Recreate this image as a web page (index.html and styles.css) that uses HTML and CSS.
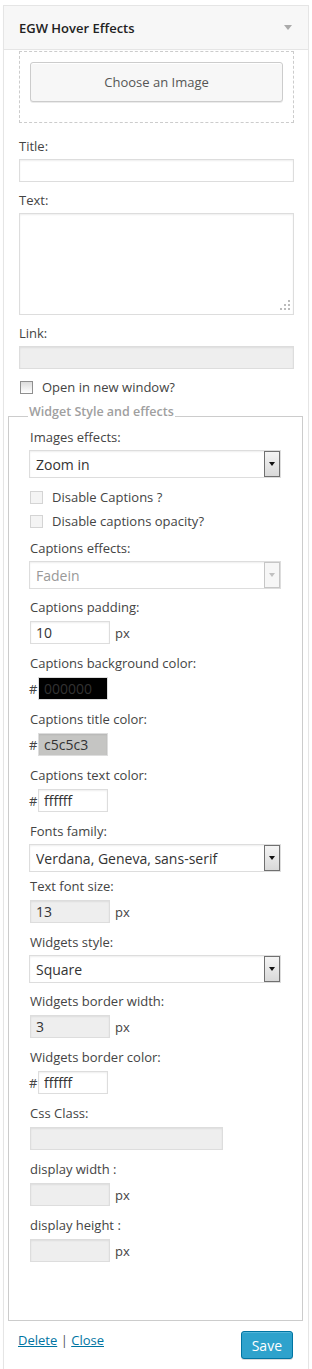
FILE: index.html
```html
<!DOCTYPE html>
<html lang="en">
<head>
  <meta charset="UTF-8" />
  <meta name="viewport" content="width=device-width, initial-scale=1.0"/>
  <title>EGW Hover Effects</title>
  <link rel="stylesheet" href="styles.css">
</head>
<body>

  <div class="widget">
    <div class="widget-top">
      <h3 class="widget-title">EGW Hover Effects</h3>
      <span class="widget-arrow"></span>
    </div>

    <div class="widget-inside">
      <div class="upload-box">
        <button type="button" class="choose-btn">Choose an Image</button>
      </div>

      <div class="field">
        <label for="egwTitle">Title:</label>
        <input type="text" id="egwTitle" class="text-input wide">
      </div>

      <div class="field">
        <label for="egwText">Text:</label>
        <div class="textarea-wrap">
          <textarea id="egwText" class="text-input wide area"></textarea>
          <svg class="grip" width="12" height="12" viewBox="0 0 12 12">
            <rect x="9" y="0" width="2" height="2" fill="#bbb"/>
            <rect x="5" y="4" width="2" height="2" fill="#bbb"/>
            <rect x="9" y="4" width="2" height="2" fill="#bbb"/>
            <rect x="1" y="8" width="2" height="2" fill="#bbb"/>
            <rect x="5" y="8" width="2" height="2" fill="#bbb"/>
            <rect x="9" y="8" width="2" height="2" fill="#bbb"/>
          </svg>
        </div>
      </div>

      <div class="field">
        <label for="egwLink">Link:</label>
        <input type="text" id="egwLink" class="text-input wide off" disabled>
      </div>

      <div class="check-row first-check">
        <input type="checkbox" id="egwNew" class="check">
        <label for="egwNew">Open in new window?</label>
      </div>
    </div>

    <fieldset class="style-box">
      <legend>Widget Style and effects</legend>

      <div class="field sel-field gap-10">
        <label>Images effects:</label>
        <div class="select-wrap">
          <select class="select">
            <option>Zoom in</option>
          </select>
          <span class="select-arrow"></span>
        </div>
      </div>

      <div class="check-row">
        <input type="checkbox" class="check" disabled>
        <label>Disable Captions ?</label>
      </div>
      <div class="check-row last">
        <input type="checkbox" class="check" disabled>
        <label>Disable captions opacity?</label>
      </div>

      <div class="field sel-field gap-9">
        <label>Captions effects:</label>
        <div class="select-wrap">
          <select class="select" disabled>
            <option>Fadein</option>
          </select>
          <span class="select-arrow dim"></span>
        </div>
      </div>

      <div class="field">
        <label>Captions padding:</label>
        <div class="inline">
          <input type="text" class="text-input short" value="10">
          <span class="unit">px</span>
        </div>
      </div>

      <div class="field">
        <label>Captions background color:</label>
        <div class="inline hash-row">
          <span class="hash">#</span>
          <input type="text" class="text-input color" value="000000" style="background-color:#000000">
        </div>
      </div>

      <div class="field">
        <label>Captions title color:</label>
        <div class="inline hash-row">
          <span class="hash">#</span>
          <input type="text" class="text-input color" value="c5c5c3" style="background-color:#c5c5c3">
        </div>
      </div>

      <div class="field">
        <label>Captions text color:</label>
        <div class="inline hash-row">
          <span class="hash">#</span>
          <input type="text" class="text-input color" value="ffffff" style="background-color:#ffffff">
        </div>
      </div>

      <div class="field sel-field gap-5">
        <label>Fonts family:</label>
        <div class="select-wrap">
          <select class="select">
            <option>Verdana, Geneva, sans-serif</option>
          </select>
          <span class="select-arrow"></span>
        </div>
      </div>

      <div class="field">
        <label>Text font size:</label>
        <div class="inline">
          <input type="text" class="text-input short off" value="13" disabled>
          <span class="unit">px</span>
        </div>
      </div>

      <div class="field sel-field gap-9">
        <label>Widgets style:</label>
        <div class="select-wrap">
          <select class="select">
            <option>Square</option>
          </select>
          <span class="select-arrow"></span>
        </div>
      </div>

      <div class="field">
        <label>Widgets border width:</label>
        <div class="inline">
          <input type="text" class="text-input short off" value="3" disabled>
          <span class="unit">px</span>
        </div>
      </div>

      <div class="field">
        <label>Widgets border color:</label>
        <div class="inline hash-row">
          <span class="hash">#</span>
          <input type="text" class="text-input color" value="ffffff" style="background-color:#ffffff">
        </div>
      </div>

      <div class="field">
        <label>Css Class:</label>
        <input type="text" class="text-input css-class off" disabled>
      </div>

      <div class="field">
        <label>display width :</label>
        <div class="inline">
          <input type="text" class="text-input short off" disabled>
          <span class="unit">px</span>
        </div>
      </div>

      <div class="field last">
        <label>display height :</label>
        <div class="inline">
          <input type="text" class="text-input short off" disabled>
          <span class="unit">px</span>
        </div>
      </div>
    </fieldset>

    <div class="widget-actions">
      <div class="links">
        <a href="#">Delete</a> <span class="sep">|</span> <a href="#">Close</a>
      </div>
      <button type="button" class="button-primary">Save</button>
    </div>
  </div>

</body>
</html>
```

FILE: styles.css
```css
body {
  margin: 0;
  font-family: "Open Sans", "Liberation Sans", sans-serif;
  font-size: 13px;
  color: #444;
  background: #fff;
}
.widget {
  width: 306px;
  margin: 5px 0 0 3px;
  box-sizing: border-box;
  border: 1px solid #e5e5e5;
  background: #fff;
  box-shadow: 0 1px 1px rgba(0,0,0,0.04);
}
.widget-top {
  height: 43px;
  display: flex;
  align-items: center;
  justify-content: space-between;
  padding: 0 16px 0 15px;
  background: #f7f7f7;
  border-bottom: 1px solid #e5e5e5;
}
.widget-title {
  margin: 0;
  font-size: 13px;
  font-weight: 600;
  color: #222;
}
.widget-arrow {
  width: 0;
  height: 0;
  border-left: 4px solid transparent;
  border-right: 4px solid transparent;
  border-top: 5px solid #aaa;
}
.widget-inside {
  padding: 1px 14px 8px 15px;
}
.upload-box {
  border: 1px dashed #ccc;
  padding: 10px 10px 20px;
  margin-bottom: 14px;
}
.choose-btn {
  display: block;
  width: 100%;
  height: 40px;
  border: 1px solid #ccc;
  border-radius: 3px;
  background: #f7f7f7;
  color: #555;
  font-family: "Open Sans", sans-serif;
  font-size: 13px;
  box-shadow: inset 0 1px 0 #fff, 0 1px 0 rgba(0,0,0,0.08);
}
.field {
  margin: 0 0 9px;
}
.field label {
  display: block;
  line-height: 18px;
  margin-bottom: 4px;
}
.text-input {
  display: block;
  box-sizing: border-box;
  height: 23px;
  margin: 0;
  padding: 0 5px;
  border: 1px solid #ddd;
  box-shadow: inset 0 1px 2px rgba(0,0,0,0.07);
  background: #fff;
  color: #333;
  font-family: "Open Sans", sans-serif;
  font-size: 14px;
}
.text-input.off {
  background: #eee;
}
.wide {
  width: 100%;
}
.textarea-wrap {
  position: relative;
}
.area {
  height: 102px;
  resize: none;
}
.grip {
  position: absolute;
  right: 3px;
  bottom: 3px;
}
.check-row {
  display: flex;
  align-items: center;
  line-height: 18px;
  margin-bottom: 6px;
}
.check-row.first-check {
  margin: 0 0 0 1px;
}
.check-row.last {
  margin-bottom: 9px;
}
.check {
  appearance: none;
  width: 13px;
  height: 13px;
  margin: 0 9px 0 0;
  border: 1px solid #8f8f8f;
  background: linear-gradient(#dcdcdc, #fff);
}
.check:disabled {
  border-color: #d4d4d4;
  background: #f4f4f4;
}
.style-box {
  margin: 0 5px 0 4px;
  padding: 0 21px 58px;
  border: 1px solid #ccc;
  min-width: 0;
}
.style-box legend {
  margin-left: -2px;
  padding: 0 1px 8px;
  line-height: 16px;
  font-size: 12.5px;
  font-weight: 600;
  color: #a0a0a0;
}
.style-box .field {
  margin-bottom: 10px;
}
.style-box .field label {
  margin-bottom: 5px;
}
.style-box .sel-field label {
  margin-bottom: 4px;
}
.style-box .gap-10 { margin-bottom: 10px; }
.style-box .gap-9 { margin-bottom: 9px; }
.style-box .gap-5 { margin-bottom: 5px; }
.style-box .field.last {
  margin-bottom: 0;
}
.select-wrap {
  position: relative;
  width: 252px;
  margin-left: -1px;
}
.select {
  appearance: none;
  display: block;
  width: 100%;
  height: 28px;
  margin: 0;
  padding: 0 6px;
  border: 1px solid #ddd;
  border-radius: 0;
  box-shadow: inset 0 1px 2px rgba(0,0,0,0.07);
  background: #fff;
  color: #333;
  font-family: "Open Sans", sans-serif;
  font-size: 14px;
}
.select:disabled {
  color: #999;
  opacity: 1;
}
.select-arrow {
  position: absolute;
  top: 1px;
  right: 1px;
  width: 16px;
  height: 26px;
  box-sizing: border-box;
  border: 1px solid #707070;
  background: linear-gradient(#f4f4f4, #d9d9d9);
  display: flex;
  align-items: center;
  justify-content: center;
  pointer-events: none;
}
.select-arrow::after {
  content: "";
  border-left: 3px solid transparent;
  border-right: 3px solid transparent;
  border-top: 4px solid #111;
}
.select-arrow.dim {
  border-color: #c6c6c6;
  background: #f6f6f6;
}
.select-arrow.dim::after {
  border-top-color: #c0c0c0;
}
.inline {
  display: flex;
  align-items: center;
}
.short {
  width: 80px;
}
.unit {
  margin-left: 5px;
}
.hash-row {
  margin-left: -1px;
}
.hash {
  width: 9px;
}
.color {
  width: 70px;
}
.css-class {
  width: 193px;
}
.widget-actions {
  display: flex;
  justify-content: space-between;
  align-items: flex-start;
  padding: 10px 15px 10px 14px;
}
.links {
  line-height: 18px;
}
.links a {
  color: #0074a2;
  text-decoration: underline;
}
.sep {
  color: #555;
}
.button-primary {
  height: 28px;
  padding: 0 10px;
  border: 1px solid #0074a2;
  border-radius: 3px;
  background: #2ea2cc;
  color: #fff;
  font-family: "Open Sans", sans-serif;
  font-size: 14px;
  box-shadow: inset 0 1px 0 rgba(120,200,230,0.5), 0 1px 0 rgba(0,0,0,0.15);
}
```
